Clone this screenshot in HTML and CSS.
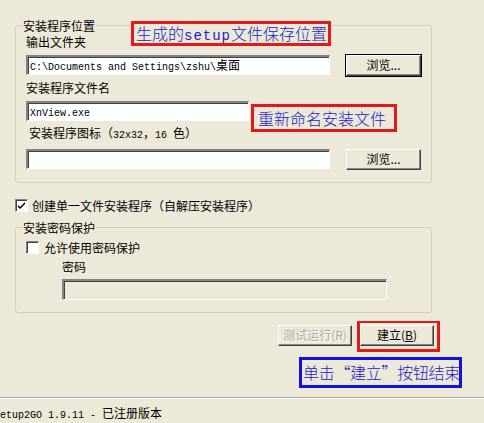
FILE: index.html
```html
<!DOCTYPE html>
<html>
<head>
    <title>Setup2GO</title>
    <link rel="stylesheet" href="styles.css">
</head>
<body>
    <div class="window">
        <div class="content">

            <div class="group group-location">
                <span class="group-title">安装程序位置</span>
                <div class="label">输出文件夹</div>
                <div class="row">
                    <div class="input input-wide"><span class="en">C:\Documents and Settings\zshu\</span>桌面</div>
                    <div class="button button-focus">浏览...</div>
                </div>
                <div class="label">安装程序文件名</div>
                <div class="row">
                    <div class="input input-short"><span class="en">XnView.exe</span></div>
                </div>
                <div class="label label-indent">安装程序图标（<span class="en">32x32</span>，<span class="en">16 </span>色）</div>
                <div class="row">
                    <div class="input input-wide"></div>
                    <div class="button">浏览...</div>
                </div>
            </div>

            <div class="check-row check-single">
                <span class="checkbox">
                    <svg width="9" height="9" viewBox="0 0 9 9"><path d="M1 4 L3 6 L8 1 L8 3 L3 8 L1 6 Z"/></svg>
                </span>
                <span>创建单一文件安装程序（自解压安装程序）</span>
            </div>

            <div class="group group-password">
                <span class="group-title">安装密码保护</span>
                <div class="check-row">
                    <span class="checkbox"></span>
                    <span>允许使用密码保护</span>
                </div>
                <div class="label label-password">密码</div>
                <div class="input input-disabled"></div>
            </div>

            <div class="actions">
                <div class="button button-disabled">测试运行(R)</div>
                <div class="button">建立(<u>B</u>)</div>
            </div>
        </div>

        <div class="status"><span class="en">etup2GO 1.9.11 - </span>已注册版本</div>

        <div class="note note-red note-location">生成的<span class="note-en">setup</span>文件保存位置</div>
        <div class="note note-red note-rename">重新命名安装文件</div>
        <div class="note note-red note-build"></div>
        <div class="note note-blue note-finish">单击“建立”按钮结束</div>
    </div>
</body>
</html>
```

FILE: styles.css
```css
body {
    margin: 0;
    background-color: #ece9d8;
    font-family: "Noto Sans CJK SC", "Liberation Sans", sans-serif;
    font-size: 12px;
    color: #000;
}

.window {
    position: relative;
    width: 484px;
    height: 423px;
    overflow: hidden;
    display: flex;
    flex-direction: column;
}

.content {
    padding: 0 52px 0 15px;
}

.en {
    font-family: "Liberation Mono", monospace;
    font-size: 10px;
}

.group {
    position: relative;
    border: 1px solid #d0d0bf;
    border-radius: 3px;
    padding: 0 10px 12px 10px;
}

.group-location {
    margin-top: 25px;
}

.group-password {
    margin-top: 15px;
}

.group-title {
    position: absolute;
    top: -8px;
    left: 6px;
    padding: 0 1px;
    line-height: 16px;
    background-color: #ece9d8;
}

.label {
    line-height: 14px;
    margin-top: 9px;
}

.label + .row {
    margin-top: 6px;
}

.row + .label {
    margin-top: 5px;
}

.label-indent {
    margin-left: 3px;
}

.row {
    display: flex;
    align-items: flex-start;
}

.input {
    box-sizing: border-box;
    height: 20px;
    line-height: 16px;
    padding-left: 2px;
    background-color: #fff;
    border-style: solid;
    border-width: 2px 1px 1px 2px;
    border-color: #848284 #fff #fff #848284;
    box-shadow: inset 1px 1px #404040;
    white-space: nowrap;
    overflow: hidden;
}

.input-wide {
    width: 304px;
}

.input-short {
    width: 223px;
}

.input-disabled {
    width: 325px;
    height: 21px;
    margin: 5px 0 0 36px;
    background-color: #ece9d8;
}

.button {
    box-sizing: border-box;
    width: 75px;
    height: 21px;
    line-height: 17px;
    text-align: center;
    border: 1px solid;
    border-color: #fff #404040 #404040 #fff;
    box-shadow: inset -1px -1px #848284;
    background-color: #ece9d8;
}

.row .button {
    margin-left: 16px;
}

.button-focus {
    outline: 1px solid #000;
}

.button-disabled {
    color: #aca899;
    text-shadow: 1px 1px #fff;
}

.check-row {
    display: flex;
    align-items: center;
    gap: 5px;
    height: 14px;
    margin-top: 12px;
}

.check-single {
    margin-top: 15px;
    gap: 4px;
}

.checkbox {
    box-sizing: border-box;
    width: 13px;
    height: 13px;
    display: flex;
    align-items: center;
    justify-content: center;
    background-color: #fff;
    border: 1px solid;
    border-color: #848284 #fff #fff #848284;
    box-shadow: inset 1px 1px #404040;
}

.checkbox svg path {
    fill: #000;
}

.label-password {
    margin: 6px 0 0 36px;
}

.actions {
    display: flex;
    justify-content: flex-end;
    gap: 8px;
    margin: 12px -2px 0 0;
}

.actions .button {
    width: 74px;
}

.status {
    margin-top: auto;
    height: 26px;
    box-sizing: border-box;
    padding-top: 8px;
    line-height: 14px;
    border-top: 1px solid #aca899;
    box-shadow: inset 0 1px #fff;
    white-space: nowrap;
}

.note {
    position: absolute;
    box-sizing: border-box;
    border: 3px solid #e41a1a;
    color: #1a1ac8;
    font-size: 16px;
    font-weight: 300;
    line-height: 19px;
    padding-left: 2px;
    white-space: nowrap;
    background-color: #ece9d8;
}

.note-en {
    font-family: "Liberation Mono", monospace;
    font-size: 14px;
    letter-spacing: 1px;
}

.note-location {
    left: 131px;
    top: 21px;
    width: 200px;
    height: 25px;
}

.note-rename {
    left: 251px;
    top: 104px;
    width: 146px;
    height: 28px;
    padding: 2px 0 0 4px;
}

.note-build {
    left: 357px;
    top: 321px;
    width: 83px;
    height: 31px;
    background: none;
    border-top-width: 2px;
}

.note-blue {
    border-color: #1010e0;
    left: 299px;
    top: 357px;
    width: 163px;
    height: 31px;
    padding: 3px 0 0 1px;
    letter-spacing: -0.3px;
}
```
